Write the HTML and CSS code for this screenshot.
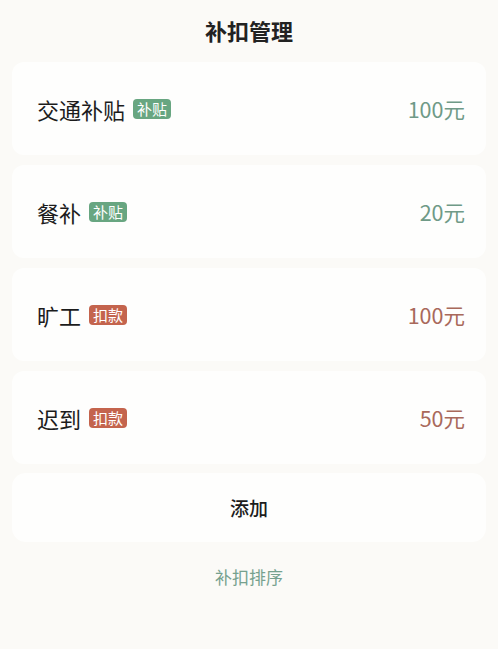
FILE: index.html
```html
<!DOCTYPE html>
<html lang="zh">
<head>
<meta charset="utf-8">
<title>补扣管理</title>
<link rel="stylesheet" href="styles.css">
</head>
<body>
<header class="header">补扣管理</header>
<main class="list">
  <div class="card">
    <div class="left"><span class="name">交通补贴</span><span class="tag tag-green">补贴</span></div>
    <span class="amount green">100元</span>
  </div>
  <div class="card">
    <div class="left"><span class="name">餐补</span><span class="tag tag-green">补贴</span></div>
    <span class="amount green">20元</span>
  </div>
  <div class="card">
    <div class="left"><span class="name">旷工</span><span class="tag tag-red">扣款</span></div>
    <span class="amount red">100元</span>
  </div>
  <div class="card">
    <div class="left"><span class="name">迟到</span><span class="tag tag-red">扣款</span></div>
    <span class="amount red">50元</span>
  </div>
</main>
<div class="add">添加</div>
<div class="sort">补扣排序</div>
</body>
</html>
```
FILE: styles.css
```css
* { box-sizing: border-box; }
html, body { margin: 0; padding: 0; }
body {
  background: #fbfaf7;
  font-family: "Noto Sans CJK SC", "Noto Sans", sans-serif;
  color: #1c1c1c;
  width: 498px;
  height: 649px;
  overflow: hidden;
}
.header {
  height: 62px;
  display: flex;
  align-items: center;
  justify-content: center;
  font-size: 22px;
  font-weight: 700;
  color: #222;
  padding-bottom: 2px;
}
.list {
  display: flex;
  flex-direction: column;
  gap: 10px;
  padding: 0 12px;
}
.card {
  height: 93px;
  background: #fefefd;
  border-radius: 12px;
  display: flex;
  align-items: center;
  justify-content: space-between;
  padding: 0 21px 0 25px;
}
.card:nth-child(1) .left { padding-top: 1px; }
.left { display: flex; align-items: center; }
.name { font-size: 22px; color: #1c1c1c; }
.tag {
  margin-left: 8px;
  font-size: 15px;
  line-height: 20px;
  height: 20px;
  padding: 0 4px;
  border-radius: 4px;
  color: #fff;
}
.tag-green { background: #68a681; }
.tag-red { background: #c4644d; }
.amount { font-size: 21.5px; }
.green { color: #6f9a87; }
.red { color: #a9695b; }
.add {
  margin: 9px 12px 0;
  height: 69px;
  background: #fefefd;
  border-radius: 14px;
  display: flex;
  align-items: center;
  justify-content: center;
  font-size: 19px;
  font-weight: 500;
  color: #1c1c1c;
}
.sort {
  text-align: center;
  margin-top: 22px;
  font-size: 17px;
  color: #76a18e;
}
```
